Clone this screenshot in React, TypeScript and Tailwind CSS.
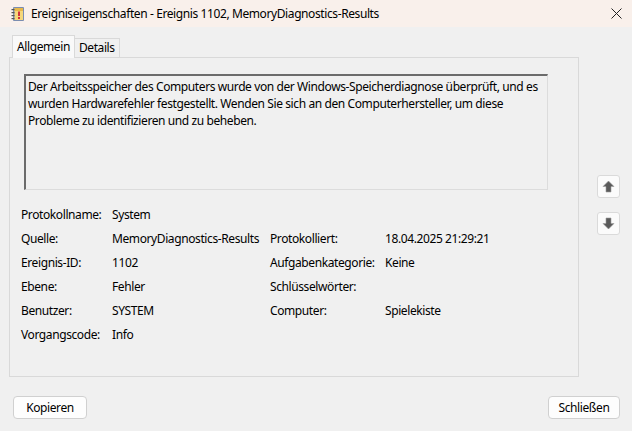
import React from "react";

const font = { fontFamily: '"Noto Sans", "Open Sans", sans-serif' };

function TitleIcon() {
  return (
    <svg width="16" height="16" viewBox="0 0 16 16">
      <rect x="3" y="1" width="11" height="14" rx="1" fill="#7b8db0" />
      <rect x="4.5" y="2" width="8.5" height="12" fill="#f5d77a" />
      <rect x="4.5" y="2" width="8.5" height="3" fill="#e8b84a" />
      <rect x="1.5" y="3" width="3" height="1.2" fill="#555" />
      <rect x="1.5" y="6" width="3" height="1.2" fill="#555" />
      <rect x="1.5" y="9" width="3" height="1.2" fill="#555" />
      <rect x="1.5" y="12" width="3" height="1.2" fill="#555" />
      <rect x="8" y="5.5" width="2" height="4.5" fill="#d2303a" />
      <rect x="8" y="11" width="2" height="2" fill="#d2303a" />
    </svg>
  );
}

function Arrow({ down }: { down?: boolean }) {
  return (
    <svg width="13" height="13" viewBox="0 0 13 13" style={{ transform: down ? "rotate(180deg)" : undefined }}>
      <path d="M6.5 1 L12 6.5 L9 6.5 L9 12 L4 12 L4 6.5 L1 6.5 Z" fill="#5a5a5a" stroke="#9a9a9a" strokeWidth="0.6" strokeLinejoin="round" />
    </svg>
  );
}

const rows: [string, string, string, string][] = [
  ["Protokollname:", "System", "", ""],
  ["Quelle:", "MemoryDiagnostics-Results", "Protokolliert:", "18.04.2025 21:29:21"],
  ["Ereignis-ID:", "1102", "Aufgabenkategorie:", "Keine"],
  ["Ebene:", "Fehler", "Schlüsselwörter:", ""],
  ["Benutzer:", "SYSTEM", "Computer:", "Spielekiste"],
  ["Vorgangscode:", "Info", "", ""],
];

export default function App() {
  return (
    <div className="w-[632px] h-[431px] bg-[#f0f0f0] text-[12px] tracking-[-0.4px] text-[#1a1a1a] flex flex-col overflow-hidden" style={font}>
      {/* Title bar */}
      <div className="h-[27px] bg-[#f9f0eb] flex items-center shrink-0">
        <div className="ml-[10px] w-[16px] h-[16px]">
          <TitleIcon />
        </div>
        <span className="ml-[5px] text-[12px] text-black leading-none">
          Ereigniseigenschaften - Ereignis 1102, MemoryDiagnostics-Results
        </span>
        <div className="ml-auto mr-[10px] w-[12px] h-[12px] flex items-center justify-center">
          <svg width="11" height="11" viewBox="0 0 11 11">
            <path d="M0.5 0.5 L10.5 10.5 M10.5 0.5 L0.5 10.5" stroke="#222" strokeWidth="1" />
          </svg>
        </div>
      </div>

      {/* Main area */}
      <div className="flex pt-[8px]">
        <div className="ml-[9px] w-[570px] flex flex-col">
          {/* Tabs */}
          <div className="flex items-end h-[22px] pl-[3px]">
            <div className="h-[23px] px-[4px] bg-[#f9f9f9] border border-b-0 border-[#d9d9d9] flex items-center relative top-[1px] z-10 text-black">
              Allgemein
            </div>
            <div className="h-[19px] px-[4px] bg-[#f0f0f0] border border-l-0 border-b-0 border-[#d9d9d9] flex items-center text-black">
              Details
            </div>
          </div>
          {/* Panel */}
          <div className="h-[320px] border border-[#d9d9d9] bg-[#f0f0f0] pl-[14px] pt-[16px] flex flex-col">
            <div className="w-[524px] h-[116px] border-t-2 border-l-2 border-t-[#6b6b6b] border-l-[#6b6b6b] border-r border-b border-r-[#dcdcdc] border-b-[#dcdcdc] bg-[#f0f0f0] px-[2px] pt-[2px] leading-[17px] text-black">
              Der Arbeitsspeicher des Computers wurde von der Windows-Speicherdiagnose überprüft, und es wurden Hardwarefehler festgestellt. Wenden Sie sich an den Computerhersteller, um diese Probleme zu identifizieren und zu beheben.
            </div>
            <div className="mt-[13px] ml-[-3px] flex flex-col">
              {rows.map((r, i) => (
                <div key={i} className="h-[24px] flex items-center text-black">
                  <span className="w-[91px] shrink-0">{r[0]}</span>
                  <span className="w-[158px] shrink-0 whitespace-nowrap">{r[1]}</span>
                  <span className="w-[115px] shrink-0 whitespace-nowrap">{r[2]}</span>
                  <span className="whitespace-nowrap">{r[3]}</span>
                </div>
              ))}
            </div>
          </div>
        </div>
        {/* Arrow buttons */}
        <div className="ml-[18px] flex flex-col gap-[14px] pt-[140px]">
          <div className="w-[23px] h-[23px] rounded-[3px] bg-[#fbfbfb] border border-[#dadada] flex items-center justify-center">
            <Arrow />
          </div>
          <div className="w-[23px] h-[23px] rounded-[3px] bg-[#fbfbfb] border border-[#dadada] flex items-center justify-center">
            <Arrow down />
          </div>
        </div>
      </div>

      {/* Bottom buttons */}
      <div className="flex justify-between px-[12px] mt-[19px]">
        <div className="ml-[1px] w-[74px] h-[23px] rounded-[4px] bg-[#fdfdfd] border border-[#d0d0d0] flex items-center justify-center text-black">
          Kopieren
        </div>
        <div className="w-[72px] h-[23px] rounded-[4px] bg-[#fdfdfd] border border-[#d0d0d0] flex items-center justify-center text-black">
          Schließen
        </div>
      </div>
    </div>
  );
}
